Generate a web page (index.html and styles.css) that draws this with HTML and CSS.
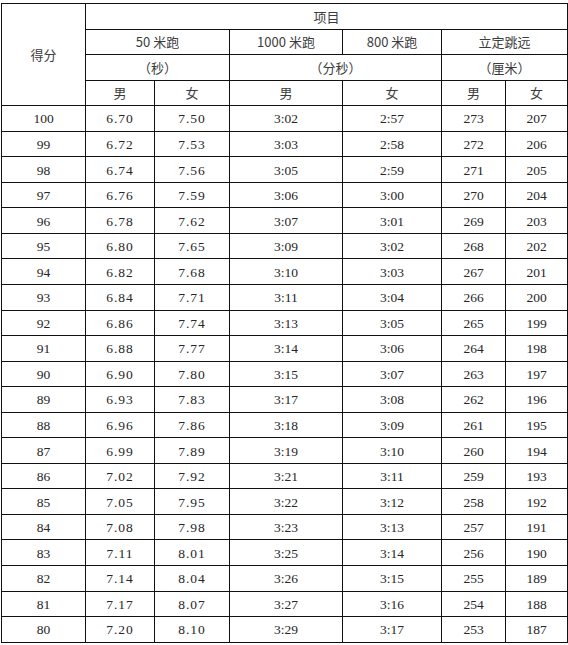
FILE: index.html
```html
<!DOCTYPE html>
<html lang="zh">
<head>
<meta charset="utf-8">
<title>评分表</title>
<link rel="stylesheet" href="styles.css">
</head>
<body>
<table class="score">
  <colgroup>
    <col class="c-score"><col class="c-50m"><col class="c-50f"><col class="c-1000"><col class="c-800"><col class="c-jm"><col class="c-jf">
  </colgroup>
  <thead>
    <tr><th rowspan="4" class="cn">得分</th><th colspan="6" class="cn">项目</th></tr>
    <tr><th colspan="2" class="cn">50 米跑</th><th class="cn">1000 米跑</th><th class="cn">800 米跑</th><th colspan="2" class="cn">立定跳远</th></tr>
    <tr><th colspan="2" class="cn">（秒）</th><th colspan="2" class="cn">（分秒）</th><th colspan="2" class="cn">（厘米）</th></tr>
    <tr><th class="cn">男</th><th class="cn">女</th><th class="cn">男</th><th class="cn">女</th><th class="cn">男</th><th class="cn">女</th></tr>
  </thead>
  <tbody>
    <tr><td>100</td><td class="sp">6.70</td><td class="sp">7.50</td><td>3:02</td><td>2:57</td><td>273</td><td>207</td></tr>
    <tr><td>99</td><td class="sp">6.72</td><td class="sp">7.53</td><td>3:03</td><td>2:58</td><td>272</td><td>206</td></tr>
    <tr><td>98</td><td class="sp">6.74</td><td class="sp">7.56</td><td>3:05</td><td>2:59</td><td>271</td><td>205</td></tr>
    <tr><td>97</td><td class="sp">6.76</td><td class="sp">7.59</td><td>3:06</td><td>3:00</td><td>270</td><td>204</td></tr>
    <tr><td>96</td><td class="sp">6.78</td><td class="sp">7.62</td><td>3:07</td><td>3:01</td><td>269</td><td>203</td></tr>
    <tr><td>95</td><td class="sp">6.80</td><td class="sp">7.65</td><td>3:09</td><td>3:02</td><td>268</td><td>202</td></tr>
    <tr><td>94</td><td class="sp">6.82</td><td class="sp">7.68</td><td>3:10</td><td>3:03</td><td>267</td><td>201</td></tr>
    <tr><td>93</td><td class="sp">6.84</td><td class="sp">7.71</td><td>3:11</td><td>3:04</td><td>266</td><td>200</td></tr>
    <tr><td>92</td><td class="sp">6.86</td><td class="sp">7.74</td><td>3:13</td><td>3:05</td><td>265</td><td>199</td></tr>
    <tr><td>91</td><td class="sp">6.88</td><td class="sp">7.77</td><td>3:14</td><td>3:06</td><td>264</td><td>198</td></tr>
    <tr><td>90</td><td class="sp">6.90</td><td class="sp">7.80</td><td>3:15</td><td>3:07</td><td>263</td><td>197</td></tr>
    <tr><td>89</td><td class="sp">6.93</td><td class="sp">7.83</td><td>3:17</td><td>3:08</td><td>262</td><td>196</td></tr>
    <tr><td>88</td><td class="sp">6.96</td><td class="sp">7.86</td><td>3:18</td><td>3:09</td><td>261</td><td>195</td></tr>
    <tr><td>87</td><td class="sp">6.99</td><td class="sp">7.89</td><td>3:19</td><td>3:10</td><td>260</td><td>194</td></tr>
    <tr><td>86</td><td class="sp">7.02</td><td class="sp">7.92</td><td>3:21</td><td>3:11</td><td>259</td><td>193</td></tr>
    <tr><td>85</td><td class="sp">7.05</td><td class="sp">7.95</td><td>3:22</td><td>3:12</td><td>258</td><td>192</td></tr>
    <tr><td>84</td><td class="sp">7.08</td><td class="sp">7.98</td><td>3:23</td><td>3:13</td><td>257</td><td>191</td></tr>
    <tr><td>83</td><td class="sp">7.11</td><td class="sp">8.01</td><td>3:25</td><td>3:14</td><td>256</td><td>190</td></tr>
    <tr><td>82</td><td class="sp">7.14</td><td class="sp">8.04</td><td>3:26</td><td>3:15</td><td>255</td><td>189</td></tr>
    <tr><td>81</td><td class="sp">7.17</td><td class="sp">8.07</td><td>3:27</td><td>3:16</td><td>254</td><td>188</td></tr>
    <tr><td>80</td><td class="sp">7.20</td><td class="sp">8.10</td><td>3:29</td><td>3:17</td><td>253</td><td>187</td></tr>
  </tbody>
</table>
</body>
</html>
```
FILE: styles.css
```css
html, body {
  margin: 0;
  padding: 0;
  background: #ffffff;
}

.score {
  border-collapse: collapse;
  table-layout: fixed;
  width: 566px;
  margin: 3px 0 0 1px;
  color: #262626;
  font-family: "Liberation Serif", "Times New Roman", "Noto Sans CJK SC", serif;
  font-size: 13.5px;
}

.c-score { width: 84px; }
.c-50m { width: 69px; }
.c-50f { width: 75px; }
.c-1000 { width: 113px; }
.c-800 { width: 99px; }
.c-jm { width: 64px; }
.c-jf { width: 62px; }

.score tr {
  height: 25.56px;
}

.score th,
.score td {
  border: 1px solid #111111;
  padding: 2px 0 0;
  text-align: center;
  vertical-align: middle;
  font-weight: normal;
  line-height: 16px;
}

.score .cn {
  font-family: "Noto Sans CJK SC", "Noto Sans", sans-serif;
  font-size: 13px;
  color: #3c3c3c;
  padding-top: 1px;
}

.score .sp {
  letter-spacing: 1px;
}
```
